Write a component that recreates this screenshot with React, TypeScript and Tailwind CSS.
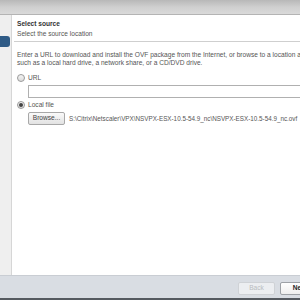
const FILE_PATH = "S:\\Citrix\\Netscaler\\VPX\\NSVPX-ESX-10.5-54.9_nc\\NSVPX-ESX-10.5-54.9_nc.ovf";

const Radio = ({ checked }: { checked?: boolean }) => (
  <span className="flex h-[8px] w-[8px] shrink-0 items-center justify-center rounded-full border border-[#9a9a9a] bg-gradient-to-b from-[#f4f4f4] to-[#dcdcdc]">
    {checked ? <span className="h-[4px] w-[4px] rounded-full bg-[#444]" /> : null}
  </span>
);

const App = () => {
  return (
    <div
      className="flex h-[300px] w-[300px] flex-col overflow-hidden bg-white text-[#555]"
      style={{ fontFamily: '"Liberation Sans", Arial, sans-serif' }}
    >
      <header className="h-[15px] shrink-0 border-b border-[#b4b4b4] bg-gradient-to-b from-[#b8b8b8] via-[#cfcfcf] to-[#dadada]" />

      <div className="flex min-h-0 flex-1">
        <aside className="w-[12px] shrink-0 border-r border-[#d6d6d6] bg-[#efefef] pt-[21px]">
          <div className="h-[11px] w-[10px] rounded-r-[3px] bg-[#2f5b86]" />
        </aside>

        <main className="min-w-0 flex-1 pt-[5px]">
          <div className="pl-[5px]">
            <p className="text-[6.6px] font-bold leading-[8px] text-[#333]">Select source</p>
            <p className="mt-[2px] text-[6.6px] leading-[8px] text-[#555]">Select the source location</p>
          </div>
          <div className="mt-[3px] ml-[2px] h-px bg-[#cfcfcf]" />

          <div className="whitespace-nowrap pl-[5px] pt-[9px] text-[6.6px] leading-[7.5px]">
            <p>Enter a URL to download and install the OVF package from the Internet, or browse to a location accessible from your computer,</p>
            <p>such as a local hard drive, a network share, or a CD/DVD drive.</p>
          </div>

          <div className="pl-[5px] pt-[8px]">
            <label className="flex h-[8px] items-center gap-[3px] text-[6.6px]">
              <Radio />
              <span>URL</span>
            </label>
            <div className="mt-[3px] ml-[11px] h-[13px] border border-r-0 border-[#b0b0b0] bg-white" />

            <label className="mt-[3px] flex h-[8px] items-center gap-[3px] text-[6.6px]">
              <Radio checked />
              <span>Local file</span>
            </label>
            <div className="mt-[3px] ml-[11px] flex items-center gap-[4px] whitespace-nowrap">
              <button
                type="button"
                className="h-[13px] w-[37px] shrink-0 rounded-[2px] border border-[#a8a8a8] bg-gradient-to-b from-[#fafafa] to-[#e2e2e2] text-[6.6px] leading-none text-[#444]"
              >
                Browse...
              </button>
              <span className="text-[6.3px] text-[#555]">{FILE_PATH}</span>
            </div>
          </div>
        </main>
      </div>

      <footer className="flex h-[25px] shrink-0 flex-col border-t border-[#c9cdd3] bg-[#d9dde3]">
        <div className="flex flex-1 items-start justify-end gap-[5px] pt-[6px] whitespace-nowrap">
          <button
            type="button"
            disabled
            className="h-[13px] w-[37px] shrink-0 rounded-[2px] border border-[#cfd2d6] bg-[#eceef1] text-[6.6px] leading-none text-[#b9bcc0]"
          >
            Back
          </button>
          <button
            type="button"
            className="-mr-[20px] h-[13px] w-[40px] shrink-0 rounded-[2px] border border-[#9da1a6] bg-gradient-to-b from-white to-[#eeeeee] text-[6.6px] font-bold leading-none text-[#222]"
          >
            Next
          </button>
        </div>
        <div className="h-[2px] bg-[#555a60]" />
      </footer>
    </div>
  );
};

export default App;
